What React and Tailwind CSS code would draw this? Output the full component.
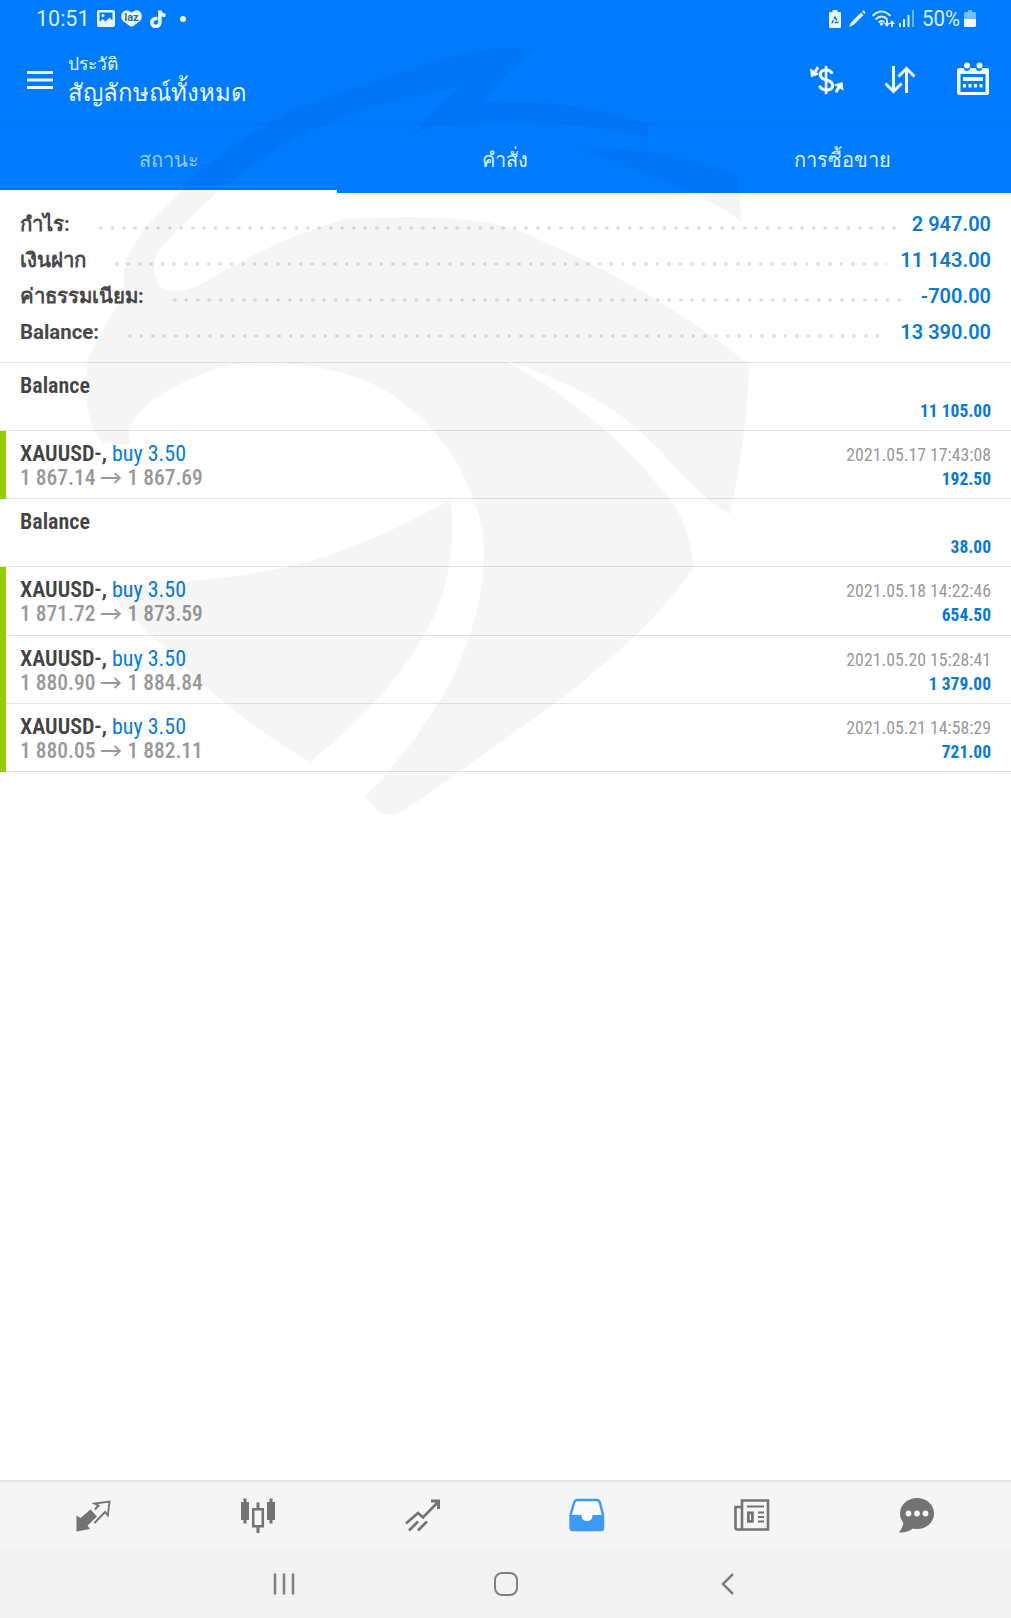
const summary = [
  { label: "กำไร:", value: "2 947.00" },
  { label: "เงินฝาก", value: "11 143.00" },
  { label: "ค่าธรรมเนียม:", value: "-700.00" },
  { label: "Balance:", value: "13 390.00" },
];

const records = [
  { type: "balance", value: "11 105.00" },
  { type: "trade", from: "1 867.14", to: "1 867.69", date: "2021.05.17 17:43:08", value: "192.50" },
  { type: "balance", value: "38.00" },
  { type: "trade", from: "1 871.72", to: "1 873.59", date: "2021.05.18 14:22:46", value: "654.50" },
  { type: "trade", from: "1 880.90", to: "1 884.84", date: "2021.05.20 15:28:41", value: "1 379.00" },
  { type: "trade", from: "1 880.05", to: "1 882.11", date: "2021.05.21 14:58:29", value: "721.00" },
];

function StatusBar() {
  return (
    <div className="flex h-[37px] items-center justify-between pl-[36px] pr-[35px] text-[21.5px] leading-none text-[#d9f1ff]">
      <div className="flex items-center">
        <span className="w-[61px]">10:51</span>
        <svg className="h-[17px] w-[18px]" viewBox="0 0 18 17">
          <path fillRule="evenodd" fill="#e8f7ff" d="M2 0h14a2 2 0 0 1 2 2v13a2 2 0 0 1-2 2H2a2 2 0 0 1-2-2V2a2 2 0 0 1 2-2ZM2.500 2.500v9.500l3-3 3 2.500 4-4 3 3V2.500Z" />
          <circle cx="6" cy="5.500" r="1.500" fill="#e8f7ff" />
        </svg>
        <div className="relative ml-[6px] h-[17px] w-[21px]">
          <svg className="h-[17px] w-[21px]" viewBox="0 0 21 17">
            <path fill="#e8f7ff" d="M1 3Q4-1 7 .6L10.500 2.500 14 .6Q18-1 20 3q2 5-1 8l-6 4.500q-2.500 2-5 0L2 11Q-1 7 1 3Z" />
          </svg>
          <span className="absolute inset-x-0 top-[3px] text-center text-[11px] font-bold leading-[10px] text-[#33708f]">laz</span>
        </div>
        <svg className="ml-[8px] h-[18px] w-[16px]" viewBox="0 0 16 18">
          <path fill="none" stroke="#e8f7ff" strokeWidth="3.600" d="M7.500 8.500H6a4 4 0 1 0 3.800 4V0.500q.6 4.500 5.700 5" />
        </svg>
        <span className="ml-[14px] h-[6px] w-[6px] rounded-full bg-[#e8f7ff]" />
      </div>
      <div className="flex items-center">
        <svg className="h-[18px] w-[12px]" viewBox="0 0 12 18">
          <path fill="#e8f7ff" d="M3.500 0h5v2H11a1 1 0 0 1 1 1v14a1 1 0 0 1-1 1H1a1 1 0 0 1-1-1V3a1 1 0 0 1 1-1h2.500Z" />
          <path fill="none" stroke="#1f6fb5" strokeWidth="1.400" strokeDasharray="4 1.300" d="M6 7 8.800 12.500H3.200Z" />
        </svg>
        <svg className="ml-[8px] h-[18px] w-[17px]" viewBox="0 0 17 18">
          <path fill="#e8f7ff" d="m0 17 2-4.500L12 2.500l2.500 2.500L4.500 15ZM13 1.500l1-1q2 0 2.500 2.500l-1 1Z" />
        </svg>
        <svg className="ml-[6px] h-[18px] w-[23px]" viewBox="0 0 23 18" fill="none" stroke="#d9f1ff" strokeWidth="1.900">
          <path d="M.5 6Q9.500-3 18.500 6M3.500 9.500q6-6 12 0M6.500 12.500q3-3 6 0" />
          <path fill="#d9f1ff" stroke="none" d="m7.500 14 2-2 2 2-2 2ZM15 17l-3-4h2v-3h2v3h2Zm5-7 3 4h-2v3h-2v-3h-2Z" />
        </svg>
        <svg className="ml-[4px] h-[17px] w-[16px]" viewBox="0 0 16 17">
          <path fill="#d9f1ff" d="M0 13h2v4H0Zm4-4h2v8H4Zm4.500-4h2v12h-2Z" />
          <path fill="#64b2ff" d="M13 0h2v17h-2Z" />
        </svg>
        <span className="ml-[7px] w-[40px] origin-left scale-x-[0.95]">50%</span>
        <svg className="ml-[2px] h-[17px] w-[12px]" viewBox="0 0 12 17">
          <path fill="#7bbcff" d="M4 0h4v2h3l1 1v6H0V3l1-1h3Z" />
          <path fill="#eefaff" d="M0 9h12v7l-1 1H1l-1-1Z" />
        </svg>
      </div>
    </div>
  );
}

function Toolbar() {
  return (
    <div className="flex h-[87px] items-start border-b border-[#0073f3] pl-[27px] pr-[21px] text-[#e6f8ff]">
      <svg className="mt-[34px] h-[18px] w-[26px]" viewBox="0 0 26 18" stroke="#e6f8ff" strokeWidth="3">
        <path d="M0 1.500h26M0 9h26M0 16.500h26" />
      </svg>
      <div className="ml-[15px] flex-1">
        <div className="mt-[17px] text-[17.500px] leading-[20px]">ประวัติ</div>
        <div className="mt-[4px] text-[24px] leading-[30px]">สัญลักษณ์ทั้งหมด</div>
      </div>
      <svg className="mr-[2px] mt-[28px] h-[30px] w-[34px]" viewBox="0 0 36 30" fill="none" stroke="#f0fbff" strokeWidth="3.200">
        <path d="M17 0v30" strokeWidth="2.800" />
        <path d="M23.500 8.500Q22 4.500 17 4.500q-6 0-6 5 0 4 6 5.500 7 1.500 7 6t-7 4.500q-5 0-7-4.500" />
        <path d="M8.500 1.500 4.500 8M27.500 28l4-7" />
        <path fill="#f0fbff" stroke="none" d="m0 2.500 1 9.500 9-3ZM35.500 26.500l-1-9.500-9 3Z" />
      </svg>
      <svg className="ml-[38px] mt-[29px] h-[28px] w-[32px]" viewBox="0 0 32 28" fill="none" stroke="#f0fbff" strokeWidth="3">
        <path d="M9.500 0v24M1.500 17.500l8 8 8-8M22.500 27V3M14.500 10.500l8-8 8 8" />
      </svg>
      <svg className="ml-[40px] mt-[25px] h-[35px] w-[34px]" viewBox="0 0 34 35">
        <path fillRule="evenodd" fill="#f0fbff" d="M3 6h5a3 3 0 0 0 6 0h6a3 3 0 0 0 6 0h5a2 2 0 0 1 2 2v23a2 2 0 0 1-2 2H3a2 2 0 0 1-2-2V8a2 2 0 0 1 2-2ZM4.500 12v18h25V12Z" />
        <circle cx="11" cy="3.500" r="3" fill="#f0fbff" />
        <circle cx="23.500" cy="3.500" r="3" fill="#f0fbff" />
        <path fill="#f0fbff" d="M7 15h20v4H7Zm0 7h3v3.500H7Zm5.500 0h3v3.500h-3Zm5.500 0h3v3.500h-3Zm5.500 0h3v3.500h-3Z" />
      </svg>
    </div>
  );
}

function Tabs() {
  return (
    <div className="grid h-[69px] grid-cols-3 grid-rows-[69px] text-center text-[20px] leading-[72px] text-[#d8f2ff]">
      <div className="border-b-[3px] border-white text-[#96c8f6]">สถานะ</div>
      <div className="pr-[2px]">คำสั่ง</div>
      <div>การซื้อขาย</div>
    </div>
  );
}

function Arrow() {
  return (
    <svg className="mx-[6px] inline-block h-[12px] w-[20px] align-[1px]" viewBox="0 0 20 12" fill="none" stroke="#999" strokeWidth="1.800">
      <path d="M0 6h19M13.500 1l5.500 5-5.500 5" />
    </svg>
  );
}

function Row({ item }) {
  const trade = item.type === "trade";
  return (
    <div className="relative flex h-[68.250px] justify-between border-b border-[#e4e4e4] px-[20px] font-['Roboto_Condensed']">
      {trade && <span className="absolute -bottom-px left-0 top-0 w-[6px] bg-[#9c0]" />}
      <div className="pt-[10px]">
        <div className="text-[22px] leading-[25px]">
          <span className="font-semibold text-[#434343]">{trade ? "XAUUSD-, " : "Balance"}</span>
          {trade && <span className="text-[#0b7bd8]">buy 3.50</span>}
        </div>
        {trade && (
          <div className="-mt-[1px] whitespace-nowrap text-[21.500px] font-medium leading-[25px] text-[#999]">
            {item.from}<Arrow />{item.to}
          </div>
        )}
      </div>
      <div className="pt-[12px] text-right">
        <div className="h-[24px] text-[17.800px] leading-[24px] text-[#999]">{item.date}</div>
        <div className="text-[17.500px] font-bold leading-[25px] text-[#0b79d0]">{item.value}</div>
      </div>
    </div>
  );
}

function Watermark() {
  return (
    <svg className="pointer-events-none absolute left-0 top-0 h-[830px] w-[1011px]" viewBox="0 0 1011 830" fill="#000" fillOpacity="0.038">
      <path d="M535 48 496 48Q455 54 400 72T289 112Q240 140 200 170L173 200 143 230 125 260 123 297 110 317 97 340 87 360V407L93 430 103 443 130 445 128 430 133 420Q150 397 193 378 218 366 244 363 330 359 390 393 450 435 469 489 482 515 484 550 484 615 450 683 415 745 365 797L377 810Q390 820 404 810L427 795 519 729Q640 645 694 568 688 515 661 489 620 435 542 382L503 359Q610 395 657 448T730 514Q748 430 749 364 650 285 519 231 470 212 345 219 280 238 220 273 180 300 160 287 150 270 157 253 180 225 218 192 260 155 311 130T459 87L437 107 411 137 429 127Q530 113 648 137L648 125Q580 98 483 102L503 77Z" />
      <path d="M577 150Q670 145 738 177L742 223Q720 203 662 180T577 150Z" />
      <path d="M451 499Q370 545 303 563T112 586L120 606 175 657Q230 715 310 762 400 690 434 616 457 565 451 499Z" />
    </svg>
  );
}

const navIcons = [
  <svg key="quotes" className="h-[36px] w-[36px]" viewBox="0 0 36 36">
    <path fill="#737373" d="M1.500 18.500 5.500 21 15.500 12.500 22 19.500 12.500 28.500 15 32 1.500 34.500Z" />
    <path fill="none" stroke="#737373" strokeWidth="1.900" d="M20 12.500 23.500 8.500 19.500 6.500 34.500 4.500 32.800 18.500 30 15 19.500 26" />
  </svg>,
  <svg key="charts" className="h-[36px] w-[36px]" viewBox="0 0 36 36">
    <path fill="#737373" d="M1 5h2.500V1.500h3V5H9v18H6.500v3.500h-3V23H1ZM27 5h2.500V1.500h3V5H35v18h-2.500v3.500h-3V23H27ZM16.500 5.500h3V12h-3Zm0 24h3V36h-3Z" />
    <path fill="none" stroke="#737373" strokeWidth="2.500" d="M13.200 12.200h9.600v17h-9.600Z" />
  </svg>,
  <svg key="trade" className="h-[36px] w-[36px]" viewBox="0 0 36 36" fill="none" stroke="#737373" strokeWidth="2.700">
    <path d="M1 26.500 13 16l5 4.500L33 5M4 33.500l9-9M13 33.500l9-9" />
    <path fill="#737373" stroke="none" d="M26 2.500h9v9.500h-3V5.500h-6Z" />
  </svg>,
  <svg key="history" className="h-[36px] w-[36px]" viewBox="0 0 36 36">
    <path fill="#f7fbff" stroke="#3f98fb" strokeWidth="2.400" d="M8 3h20q2 0 3 3l3 12v13q0 2-2 2H3.500q-2 0-2-2V18L5 6q1-3 3-3Z" />
    <path fill="#3f98fb" d="M1 18h11.500q0 6 5.500 6t5.500-6H35v14l-2 2H3l-2-2Z" />
  </svg>,
  <svg key="news" className="h-[36px] w-[36px]" viewBox="0 0 36 36" fill="none" stroke="#737373">
    <path strokeWidth="2.600" d="M8 32.500V3.500h26v29H3.500q-2 0-2-2V10H8" />
    <path strokeWidth="2.200" d="M13 9.500h17M24 15.500h6M24 20h6M24 24.500h6" />
    <path strokeWidth="2.800" d="M14.400 15.800h4v8.500h-4Z" />
  </svg>,
  <svg key="chat" className="h-[36px] w-[36px]" viewBox="0 0 36 36">
    <path fill="#737373" d="M4.500 24q0 6-4.500 11.500 8 .5 14-4Z" />
    <ellipse cx="18" cy="16.500" rx="17" ry="15.500" fill="#737373" />
    <g fill="#f5f5f5"><circle cx="9.500" cy="16.500" r="2.900" /><circle cx="18" cy="16.500" r="2.900" /><circle cx="26.500" cy="16.500" r="2.900" /></g>
  </svg>,
];

export default function App() {
  return (
    <div className="relative flex h-[1618px] w-[1011px] flex-col overflow-hidden bg-white font-['Roboto',sans-serif]">
      <header className="bg-[#007aff]">
        <StatusBar />
        <Toolbar />
        <Tabs />
      </header>
      <main className="flex-1">
        <section className="h-[169.500px] border-b border-[#e4e4e4] px-[20px] pt-[13px]">
          {summary.map((row) => (
            <div key={row.label} className="flex h-[36px] items-center font-bold leading-[36px]">
              <span className="text-[20.400px] text-[#484848]">{row.label}</span>
              <span className="ml-[25px] mr-[13px] mt-[8px] h-[4px] flex-1 bg-[radial-gradient(circle,#e0e0e0_1.500px,transparent_2px)] bg-[length:11.500px_4px] bg-repeat-x" />
              <span className="text-[20px] font-semibold text-[#0b79d0]">{row.value}</span>
            </div>
          ))}
        </section>
        {records.map((item, i) => (
          <Row key={i} item={item} />
        ))}
      </main>
      <nav className="grid h-[68px] grid-cols-6 place-items-center border-t-2 border-[#e6e6e6] bg-[#f5f5f5] pl-[11px] pr-[12px]">
        {navIcons}
      </nav>
      <div className="flex h-[70px] items-center justify-center gap-[199px] bg-[#f2f2f2] pt-[2px]">
        <svg className="h-[24px] w-[22px]" viewBox="0 0 22 24" stroke="#808080" strokeWidth="2.500">
          <path d="M2 1.500v21M11 1.500v21M20 1.500v21" />
        </svg>
        <span className="h-[24px] w-[24px] rounded-[8px] border-2 border-[#808080]" />
        <svg className="h-[24px] w-[22px]" viewBox="0 0 22 24" fill="none" stroke="#808080" strokeWidth="2.500">
          <path d="M16 2 6 12l10 10" />
        </svg>
      </div>
      <Watermark />
    </div>
  );
}
